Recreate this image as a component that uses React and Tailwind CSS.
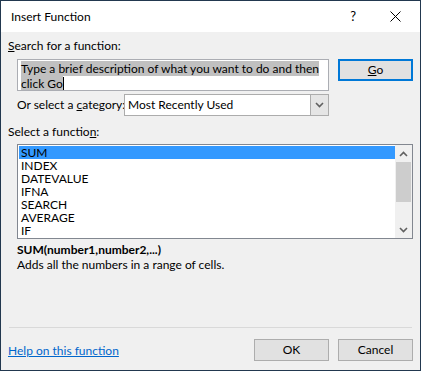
import { useState } from "react";

const FUNCS = ["SUM", "INDEX", "DATEVALUE", "IFNA", "SEARCH", "AVERAGE", "IF"];

const Chevron = ({ up }) => (
	<svg width="9" height="6" viewBox="0 0 9 6" className="block">
		<path
			d={up ? "M1 5 L4.5 1.5 L8 5" : "M1 1 L4.5 4.5 L8 1"}
			fill="none"
			stroke="#606060"
			strokeWidth="1.6"
		/>
	</svg>
);

const Button = ({ children, focused }) => (
	<button
		className={
			"w-[75px] h-[22px] bg-[#e1e1e1] flex items-center justify-center leading-none " +
			(focused ? "border-2 border-[#0078d7]" : "border border-[#adadad]")
		}
	>
		{children}
	</button>
);

export default function App() {
	const [selected, setSelected] = useState(0);

	return (
		<div className="w-[421px] h-[371px] border border-[#22384f] bg-[#f0f0f0] flex flex-col text-[12px] text-black font-['Lato',sans-serif]">
			{/* title bar */}
			<div className="h-[31px] bg-white flex items-center shrink-0">
				<span className="ml-[10px] flex-1 leading-[16px]">Insert Function</span>
				<span className="mr-[34px] text-[13px] leading-none">?</span>
				<svg width="11" height="11" viewBox="0 0 11 11" className="mr-[19px]">
					<path d="M0.5 0.5 L10.5 10.5 M10.5 0.5 L0.5 10.5" stroke="#000" strokeWidth="1" />
				</svg>
			</div>

			<div className="flex-1 flex flex-col px-[7px]">
				<div className="mt-[6px] leading-[16px]">
					<span className="underline">S</span>earch for a function:
				</div>

				<div className="mt-[5px] ml-[9px] flex items-start">
					<div className="w-[312px] h-[32px] shrink-0 border border-[#abadb3] bg-white pl-[3px] pt-[1px] leading-[15px] whitespace-nowrap overflow-hidden">
						<span className="bg-[#c0c0c0]">Type a brief description of what you want to do and then</span>
						<br />
						<span className="bg-[#c0c0c0]">click Go</span>
						<span className="inline-block w-px h-[13px] bg-black align-[-2px]"></span>
					</div>
					<div className="ml-[9px]">
						<Button focused>
							<span>
								<span className="underline">G</span>o
							</span>
						</Button>
					</div>
				</div>

				<div className="mt-[3px] ml-[9px] flex items-center">
					<span className="w-[107px] shrink-0 whitespace-nowrap leading-[16px]">
						Or select a <span className="underline">c</span>ategory:
					</span>
					<div className="w-[205px] h-[22px] border border-[#acacac] bg-white flex">
						<span className="flex-1 pl-[3px] leading-[20px]">Most Recently Used</span>
						<div className="w-[18px] bg-[#e5e5e5] border-l border-[#acacac] flex items-center justify-center">
							<Chevron />
						</div>
					</div>
				</div>

				<div className="mt-[8px] leading-[16px]">
					Select a functio<span className="underline">n</span>:
				</div>

				<div className="mt-[4px] ml-[9px] w-[396px] h-[95px] border border-[#828790] bg-white flex">
					<ul className="flex-1 pl-px pt-px">
						{FUNCS.map((f, i) => (
							<li
								key={f}
								onClick={() => setSelected(i)}
								className={
									"h-[13px] leading-[13px] pl-[2px] " + (i === selected ? "bg-[#3399ff]" : "")
								}
							>
								{f}
							</li>
						))}
					</ul>
					<div className="w-[17px] bg-[#f0f0f0] flex flex-col items-center">
						<div className="h-[17px] flex items-center justify-center">
							<Chevron up />
						</div>
						<div className="w-[15px] h-[40px] bg-[#cdcdcd]"></div>
						<div className="flex-1"></div>
						<div className="h-[17px] flex items-center justify-center">
							<Chevron />
						</div>
					</div>
				</div>

				<div className="mt-[4px] ml-[9px] font-bold leading-[14px]">SUM(number1,number2,...)</div>
				<div className="ml-[9px] leading-[14px] mt-px">Adds all the numbers in a range of cells.</div>

				<div className="flex-1"></div>
				<div className="h-px bg-[#d9d9d9] ml-px mr-[1px]"></div>
				<div className="mt-[11px] mb-[9px] flex items-center">
					<a href="#" className="flex-1 text-[#0066cc] underline leading-[16px] pt-[2px]">
						Help on this function
					</a>
					<Button>OK</Button>
					<div className="ml-[9px]">
						<Button>Cancel</Button>
					</div>
				</div>
			</div>
		</div>
	);
}
